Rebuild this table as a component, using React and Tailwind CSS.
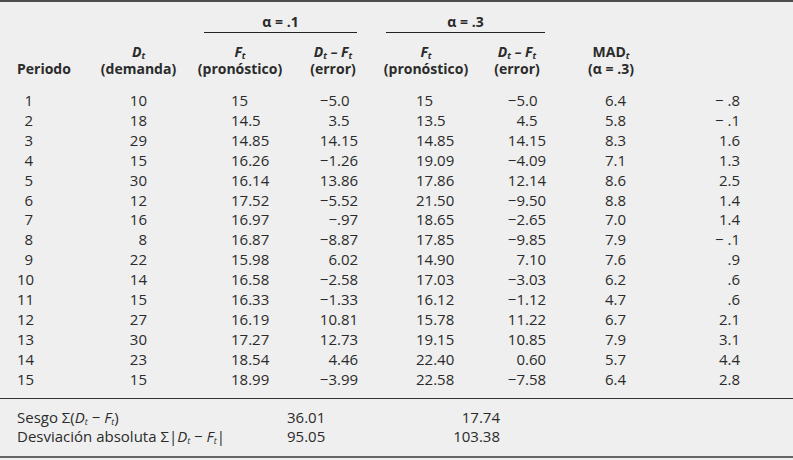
import React from 'react';

// tabla de pronóstico con suavizamiento exponencial
const rows = [
  [1, 10, '15', '−5.0', '15', '−5.0', '6.4', '− .8'],
  [2, 18, '14.5', '3.5', '13.5', '4.5', '5.8', '− .1'],
  [3, 29, '14.85', '14.15', '14.85', '14.15', '8.3', '1.6'],
  [4, 15, '16.26', '−1.26', '19.09', '−4.09', '7.1', '1.3'],
  [5, 30, '16.14', '13.86', '17.86', '12.14', '8.6', '2.5'],
  [6, 12, '17.52', '−5.52', '21.50', '−9.50', '8.8', '1.4'],
  [7, 16, '16.97', '−.97', '18.65', '−2.65', '7.0', '1.4'],
  [8, 8, '16.87', '−8.87', '17.85', '−9.85', '7.9', '− .1'],
  [9, 22, '15.98', '6.02', '14.90', '7.10', '7.6', '.9'],
  [10, 14, '16.58', '−2.58', '17.03', '−3.03', '6.2', '.6'],
  [11, 15, '16.33', '−1.33', '16.12', '−1.12', '4.7', '.6'],
  [12, 27, '16.19', '10.81', '15.78', '11.22', '6.7', '2.1'],
  [13, 30, '17.27', '12.73', '19.15', '10.85', '7.9', '3.1'],
  [14, 23, '18.54', '4.46', '22.40', '0.60', '5.7', '4.4'],
  [15, 15, '18.99', '−3.99', '22.58', '−7.58', '6.4', '2.8'],
];

const cols = 'grid grid-cols-[80px_83px_120px_66px_120px_62px_126px_86px]';

function Sub({ children }) {
  return <sub className="text-[9px] italic">{children}</sub>;
}

function DF() {
  return (
    <span className="italic">
      D<Sub>t</Sub> – F<Sub>t</Sub>
    </span>
  );
}

// alinea por el punto decimal
function Dec({ value, w }) {
  const i = value.indexOf('.');
  const whole = value.slice(0, i);
  const frac = value.slice(i);
  return (
    <div className="flex">
      <span className={`${w} text-right`}>{whole}</span>
      <span>{frac}</span>
    </div>
  );
}

export default function App() {
  return (
    <div
      className="w-[793px] h-[460px] bg-[#efefef] text-[#2b2b2b] text-[15px] overflow-hidden"
      style={{ fontFamily: '"Open Sans", "Liberation Sans", sans-serif' }}
    >
      <div className="h-[2px] bg-[#4d4d4d]" />

      {/* alfa */}
      <div className={`${cols} pl-[17px] pt-[11px] font-bold text-[14px] leading-[18px]`}>
        <div className="col-start-3 col-span-2 ml-[24px] mr-[9px] border-b border-[#222] text-center pb-[1px]">
          α = .1
        </div>
        <div className="col-span-2 ml-[20px] mr-[3px] border-b border-[#222] text-center pb-[1px]">
          α = .3
        </div>
      </div>

      {/* encabezados */}
      <div className={`${cols} pl-[17px] pt-[10px] font-bold text-[14px] leading-[17px] items-end`}>
        <div>Periodo</div>
        <div className="text-center">
          <div className="italic">
            D<Sub>t</Sub>
          </div>
          <div>(demanda)</div>
        </div>
        <div className="text-center">
          <div className="italic">
            F<Sub>t</Sub>
          </div>
          <div>(pronóstico)</div>
        </div>
        <div className="text-center">
          <div>
            <DF />
          </div>
          <div>(error)</div>
        </div>
        <div className="text-center">
          <div className="italic">
            F<Sub>t</Sub>
          </div>
          <div>(pronóstico)</div>
        </div>
        <div className="text-center">
          <div>
            <DF />
          </div>
          <div>(error)</div>
        </div>
        <div className="text-center">
          <div>
            MAD<Sub>t</Sub>
          </div>
          <div>(α = .3)</div>
        </div>
        <div />
      </div>

      {/* datos */}
      <div className="pt-[14px] leading-[19.9px]">
        {rows.map((r) => (
          <div key={r[0]} className={`${cols} pl-[17px]`}>
            <div className="w-[16px] text-right">{r[0]}</div>
            <div className="text-right pr-[33px]">{r[1]}</div>
            <div className="pl-[51px]">{r[2]}</div>
            <Dec value={r[3]} w="w-[37px]" />
            <div className="pl-[50px]">{r[4]}</div>
            <Dec value={r[5]} w="w-[39px]" />
            <div className="pl-[57px]">{r[6]}</div>
            <div className="text-right pr-[20px]">{r[7]}</div>
          </div>
        ))}
      </div>

      <div className="mt-[8px] h-px bg-[#333]" />

      {/* totales */}
      <div className="pt-[9px] pl-[17px] leading-[19px]">
        <div className="grid grid-cols-[270px_120px_93px]">
          <div>
            Sesgo Σ(<span className="italic">D<Sub>t</Sub></span> − <span className="italic">F<Sub>t</Sub></span>)
          </div>
          <div>36.01</div>
          <div className="text-right">17.74</div>
        </div>
        <div className="grid grid-cols-[270px_120px_93px]">
          <div>
            Desviación absoluta Σ|<span className="italic">D<Sub>t</Sub></span> − <span className="italic">F<Sub>t</Sub></span>|
          </div>
          <div>95.05</div>
          <div className="text-right">103.38</div>
        </div>
      </div>

      <div className="mt-[10px] h-[2px] bg-[#666]" />
    </div>
  );
}
